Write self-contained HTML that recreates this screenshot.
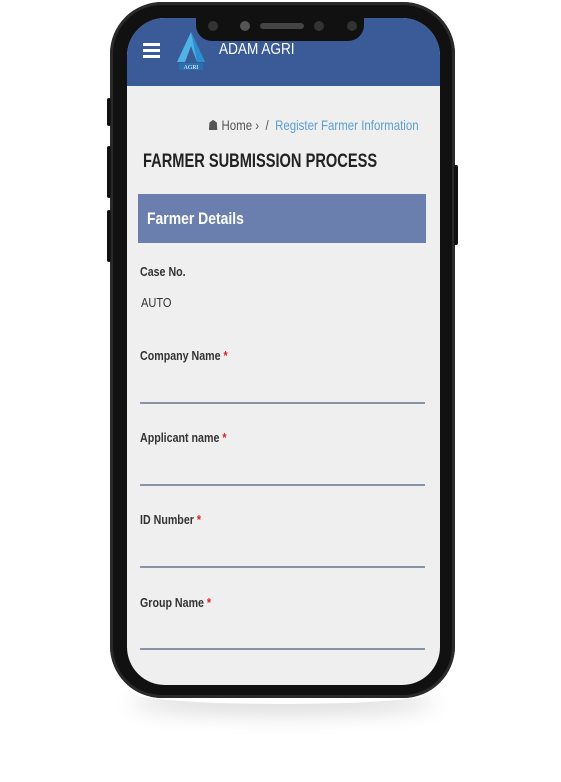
<!DOCTYPE html>
<html><head><style>
body{margin:0;width:561px;height:782px;background:#fff;position:relative;overflow:hidden;font-family:"Liberation Sans",sans-serif}
.shadow{position:absolute;left:130px;top:680px;width:305px;height:24px;border-radius:50%;box-shadow:0 10px 22px rgba(0,0,0,.15)}
.phone{position:absolute;left:110px;top:2px;width:345px;height:696px;background:#111;border-radius:52px;box-shadow:inset 0 0 0 3px #2a2a2a}
.btn{position:absolute;background:#111;width:4px;border-radius:2px}
.screen{position:absolute;left:127px;top:18px;width:313px;height:667px;background:#efefef;border-radius:38px;overflow:hidden}
.hdr{position:absolute;left:0;top:0;width:313px;height:68px;background:#3b5a98}
.notch{position:absolute;background:#111;border-radius:0 0 16px 16px}
.dot{position:absolute;width:10px;height:10px;border-radius:50%;background:#333}
.c{transform-origin:0 50%;white-space:nowrap}
.label{position:absolute;left:140px;font-size:13px;font-weight:bold;color:#333;transform:scaleX(.82);transform-origin:0 50%;white-space:nowrap}
.label b{color:#d22;}
.line{position:absolute;left:140px;width:285px;height:2px;background:#8893a8}
</style></head><body>
<div class="shadow"></div>
<div class="phone"></div>
<div class="btn" style="left:107px;top:98px;height:28px"></div>
<div class="btn" style="left:107px;top:146px;height:52px"></div>
<div class="btn" style="left:107px;top:210px;height:52px"></div>
<div class="btn" style="left:454px;top:165px;height:80px"></div>
<div class="screen">
 <div class="hdr"></div>
 <div style="position:absolute;left:16px;top:25px;width:17px;height:3px;background:#fff;box-shadow:0 6px 0 #fff,0 12px 0 #fff"></div>
 <svg style="position:absolute;left:48px;top:12px" width="32" height="40" viewBox="0 0 32 40"><path d="M16 2 L30 32 L22 32 L16 16 L10 32 L2 32 Z" fill="#4fb3e8"/><path d="M16 2 L30 32 L22 32 Z" fill="#2a8fd0"/><rect x="4" y="33" width="24" height="7" fill="#2a6fb0"/><text x="16" y="39" font-size="6" fill="#fff" text-anchor="middle" font-family="Liberation Serif">AGRI</text></svg>
 <div class="c" style="position:absolute;left:92px;top:23px;color:#fff;font-size:16px;transform:scaleX(.85)">ADAM AGRI</div>
 <div class="c" style="position:absolute;left:81px;top:99px;font-size:14px;color:#555;transform:scaleX(.82)">☗ Home › &nbsp;/ &nbsp;<span style="color:#5b9fd0">Register Farmer Information</span></div>
 <div class="c" style="position:absolute;left:16px;top:133px;font-size:19px;font-weight:bold;color:#222;transform:scaleX(.77)">FARMER SUBMISSION PROCESS</div>
 <div style="position:absolute;left:11px;top:176px;width:288px;height:49px;background:#6a7fad"></div>
 <div class="c" style="position:absolute;left:20px;top:191px;color:#fff;font-size:17px;font-weight:bold;transform:scaleX(.82)">Farmer Details</div>
</div>
<div class="notch" style="left:196px;top:17px;width:168px;height:24px"></div>
<div class="dot" style="left:208px;top:21px"></div>
<div class="dot" style="left:240px;top:21px;background:#555"></div>
<div style="position:absolute;left:260px;top:23px;width:44px;height:6px;border-radius:3px;background:#444"></div>
<div class="dot" style="left:314px;top:21px"></div>
<div class="dot" style="left:347px;top:21px"></div>
<div class="label" style="top:264px">Case No.</div>
<div class="c" style="position:absolute;left:141px;top:295px;font-size:13px;color:#333;transform:scaleX(.85)">AUTO</div>
<div class="label" style="top:348px">Company Name <b>*</b></div>
<div class="line" style="top:402px"></div>
<div class="label" style="top:430px">Applicant name <b>*</b></div>
<div class="line" style="top:484px"></div>
<div class="label" style="top:512px">ID Number <b>*</b></div>
<div class="line" style="top:566px"></div>
<div class="label" style="top:595px">Group Name <b>*</b></div>
<div class="line" style="top:648px"></div>
</body></html>
